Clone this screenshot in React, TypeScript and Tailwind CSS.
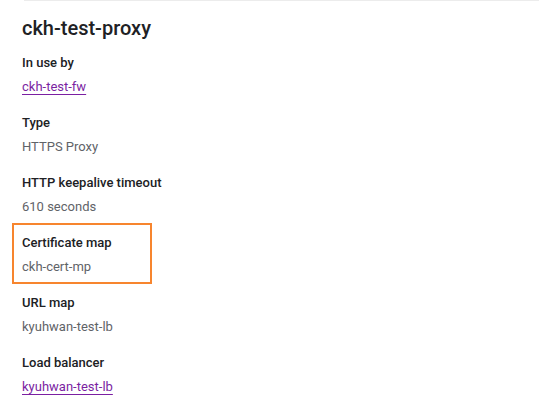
import React from "react";

type Item = { label: string; value: string; link?: boolean; highlight?: boolean };

const items: Item[] = [
  { label: "In use by", value: "ckh-test-fw", link: true },
  { label: "Type", value: "HTTPS Proxy" },
  { label: "HTTP keepalive timeout", value: "610 seconds" },
  { label: "Certificate map", value: "ckh-cert-mp", highlight: true },
  { label: "URL map", value: "kyuhwan-test-lb" },
  { label: "Load balancer", value: "kyuhwan-test-lb", link: true },
];

export default function App() {
  return (
    <div
      className="w-[539px] h-[406px] bg-white overflow-hidden relative"
      style={{ fontFamily: "Roboto, 'Noto Sans', Arial, sans-serif" }}
    >
      <div className="ml-[24px] h-[1px] bg-[#ececec]" />
      <div className="pl-[22px] pt-[13px]">
        <h1 className="text-[20px] leading-[28px] font-medium text-[#202124]">ckh-test-proxy</h1>
        <div className="mt-[11px] flex flex-col gap-[16px]">
          {items.map((it) => (
            <div key={it.label} className="relative flex flex-col gap-[4px]">
              {it.highlight && (
                <div className="absolute left-[-10px] top-[-10px] w-[140px] h-[61px] border-2 border-[#f7852e]" />
              )}
              <div className="text-[13px] leading-[20px] font-medium text-[#202124]">{it.label}</div>
              <div className="text-[13px] leading-[20px]">
                {it.link ? (
                  <a className="text-[#7b1fa2] underline underline-offset-[3px] decoration-[#7b1fa2]">{it.value}</a>
                ) : (
                  <span className="text-[#5f6368]">{it.value}</span>
                )}
              </div>
            </div>
          ))}
        </div>
      </div>
    </div>
  );
}
